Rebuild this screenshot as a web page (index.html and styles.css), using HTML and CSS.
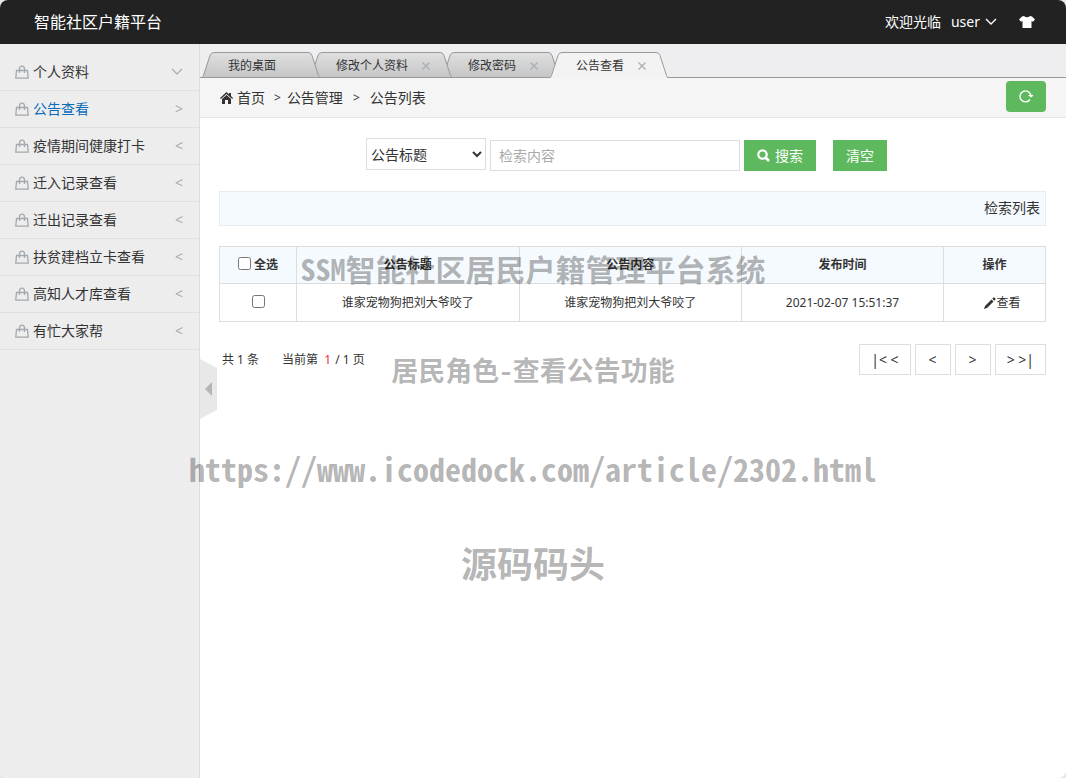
FILE: index.html
```html
<!DOCTYPE html>
<html lang="zh-CN">
<head>
<meta charset="utf-8">
<title>智能社区户籍平台</title>
<link rel="stylesheet" href="styles.css">
</head>
<body>
<svg class="defs" aria-hidden="true">
  <defs>
    <linearGradient id="tab-grey" x1="0" y1="0" x2="0" y2="1"><stop offset="0" stop-color="#dedfde"/><stop offset="1" stop-color="#c5c5c7"/></linearGradient>
    <symbol id="bag" viewBox="0 0 14 14"><path d="M1.5 5.5h11l.7 7.7H.8z" fill="none" stroke="#a3a9b0" stroke-width="1.3"/><path d="M4.5 8V4a2.5 2.9 0 0 1 5 0v4" fill="none" stroke="#a3a9b0" stroke-width="1.3"/></symbol>
    <symbol id="cap-left" viewBox="0 0 12 26"><path d="M0 26 1 24 7.5 4Q8.700 .5 12 .5V26z"/><path d="M0 25.500Q1 25 1.500 23.500L8 3.500Q9 .5 12 .5" fill="none" stroke="#999"/></symbol>
    <symbol id="cap-right" viewBox="0 0 12 26"><path d="M12 26 11 24 4.500 4Q3.300 .5 0 .5V26z"/><path d="M12 25.500Q11 25 10.500 23.500L4 3.500Q3 .5 0 .5" fill="none" stroke="#999"/></symbol>
    <symbol id="close" viewBox="0 0 8 8"><path d="M.5 .5l7 7M7.500 .5l-7 7" stroke="#a9aeb3" stroke-width="1.300"/></symbol>
  </defs>
</svg>
<div class="app">
  <header class="header">
    <h1 class="brand">智能社区户籍平台</h1>
    <div class="account">
      <span>欢迎光临</span>
      <button class="user" type="button">user
        <svg width="12" height="8" viewBox="0 0 12 8"><path d="M1 1l5 5 5-5" fill="none" stroke="#fff" stroke-width="1.400"/></svg>
      </button>
      <button class="skin" type="button" aria-label="换肤">
        <svg width="16" height="12" viewBox="0 0 16 12"><path d="M5 0Q8 2.600 11 0L13 .6 16 3.500 14 5.800 12.500 5V12H3.500V5L2 5.800 0 3.500 3 .6z" fill="#fff"/></svg>
      </button>
    </div>
  </header>
  <div class="layout">
    <nav class="sidebar">
      <a class="menu" href="#"><svg class="bag"><use href="#bag"/></svg><span>个人资料</span><svg class="down" viewBox="0 0 12 8"><path d="M1 1l5 5 5-5" fill="none" stroke="#aaa" stroke-width="1.200"/></svg></a>
      <a class="menu menu-active" href="#"><svg class="bag"><use href="#bag"/></svg><span>公告查看</span><i class="arrow">&gt;</i></a>
      <a class="menu" href="#"><svg class="bag"><use href="#bag"/></svg><span>疫情期间健康打卡</span><i class="arrow">&lt;</i></a>
      <a class="menu" href="#"><svg class="bag"><use href="#bag"/></svg><span>迁入记录查看</span><i class="arrow">&lt;</i></a>
      <a class="menu" href="#"><svg class="bag"><use href="#bag"/></svg><span>迁出记录查看</span><i class="arrow">&lt;</i></a>
      <a class="menu" href="#"><svg class="bag"><use href="#bag"/></svg><span>扶贫建档立卡查看</span><i class="arrow">&lt;</i></a>
      <a class="menu" href="#"><svg class="bag"><use href="#bag"/></svg><span>高知人才库查看</span><i class="arrow">&lt;</i></a>
      <a class="menu" href="#"><svg class="bag"><use href="#bag"/></svg><span>有忙大家帮</span><i class="arrow">&lt;</i></a>
    </nav>
    <main class="main">
      <button class="collapse" type="button" aria-label="收起菜单">
        <svg width="17" height="60" viewBox="0 0 17 60"><path d="M0 0 17 9V51L0 60z" fill="#e8e8e8"/><path d="M12 23v14l-7-7z" fill="#b5b5b5"/></svg>
      </button>
      <div class="tabs">
        <div class="tab"><svg class="cap"><use href="#cap-left"/></svg><div class="tab-body"><span>我的桌面</span></div><svg class="cap"><use href="#cap-right"/></svg></div>
        <div class="tab"><svg class="cap"><use href="#cap-left"/></svg><div class="tab-body"><span>修改个人资料</span><button class="close" type="button" aria-label="关闭"><svg><use href="#close"/></svg></button></div><svg class="cap"><use href="#cap-right"/></svg></div>
        <div class="tab"><svg class="cap"><use href="#cap-left"/></svg><div class="tab-body"><span>修改密码</span><button class="close" type="button" aria-label="关闭"><svg><use href="#close"/></svg></button></div><svg class="cap"><use href="#cap-right"/></svg></div>
        <div class="tab tab-active"><svg class="cap"><use href="#cap-left"/></svg><div class="tab-body"><span>公告查看</span><button class="close" type="button" aria-label="关闭"><svg><use href="#close"/></svg></button></div><svg class="cap"><use href="#cap-right"/></svg></div>
      </div>
      <div class="crumbs">
        <svg width="13" height="12" viewBox="0 0 13 12"><path d="M6.500 0 9 2.300V1h2v3L13 6l-.8.9L6.500 1.900.8 6.900 0 6z" fill="#333"/><path d="M6.500 3 11 7v5H8V8H5v4H2V7z" fill="#333"/></svg>
        <span>首页</span><span class="sep">&gt;</span><span>公告管理</span><span class="sep sep-wide">&gt;</span><span>公告列表</span>
        <button class="refresh" type="button" aria-label="刷新">
          <svg width="14" height="14" viewBox="0 0 14 14"><path d="M11 10.500A5.500 5.500 0 1 1 11.800 6" fill="none" stroke="#fff" stroke-width="1.400"/><path d="M8.800 6h5.200v1L12 8.500z" fill="#fff"/></svg>
        </button>
      </div>
      <div class="content">
        <form class="search">
          <select class="field-select" aria-label="检索字段"><option>公告标题</option></select>
          <input class="field-text" type="text" placeholder="检索内容" aria-label="检索内容">
          <button class="btn" type="button"><svg width="13" height="13" viewBox="0 0 13 13"><circle cx="5.500" cy="5.500" r="4.200" fill="none" stroke="#fff" stroke-width="2.200"/><path d="M8.500 8.500l3.500 3.500" stroke="#fff" stroke-width="2.600"/></svg>搜索</button>
          <button class="btn btn-clear" type="reset">清空</button>
        </form>
        <div class="list-bar">检索列表</div>
        <table class="grid">
          <colgroup><col class="c-check"><col class="c-text"><col class="c-text"><col class="c-time"><col class="c-op"></colgroup>
          <thead><tr><th><label class="check"><input type="checkbox">全选</label></th><th>公告标题</th><th>公告内容</th><th>发布时间</th><th>操作</th></tr></thead>
          <tbody><tr><td><div class="check"><input type="checkbox" aria-label="选择"></div></td><td>谁家宠物狗把刘大爷咬了</td><td>谁家宠物狗把刘大爷咬了</td><td>2021-02-07 15:51:37</td><td><a class="view" href="#"><svg width="12" height="12" viewBox="0 0 12 12"><path d="M0 12 1 9 7.500 2.500 9.500 4.500 3 11zM8.300 1.700 9.400.6q.5-.4 1 0l1 1q.4.500 0 1L10.300 3.700z" fill="#333"/></svg>查看</a></td></tr></tbody>
        </table>
        <div class="pager">
          <p class="summary"><span>共 1 条</span><span>当前第 <b class="current">1</b> / 1 页</span></p>
          <div class="pages"><button class="edge" type="button">|&lt; &lt;</button><button type="button">&lt;</button><button type="button">&gt;</button><button class="edge" type="button">&gt; &gt;|</button></div>
        </div>
      </div>
    </main>
  </div>
  <div class="watermark">
    <p class="mark-title">SSM智能社区居民户籍管理平台系统</p>
    <p class="mark-role">居民角色-查看公告功能</p>
    <p class="mark-url">https://www.icodedock.com/article/2302.html</p>
    <p class="mark-name">源码码头</p>
  </div>
</div>
</body>
</html>
```
FILE: styles.css
```css
* { box-sizing: border-box; }
body { margin: 0; background: #e6e8ea; color: #333; font: 14px/20px "Noto Sans", "Noto Sans CJK SC", sans-serif; }
a { color: inherit; text-decoration: none; }
button, input, select { font: inherit; color: inherit; }
button { display: inline-flex; align-items: center; justify-content: center; margin: 0; padding: 0; border: 0; background: none; }
p, h1 { margin: 0; }
svg { display: block; flex: none; }
.defs { position: absolute; width: 0; height: 0; }
.app { position: relative; display: flex; flex-direction: column; min-height: 100vh; overflow: hidden; border-radius: 8px; background: #fff; }

.header { display: flex; align-items: center; justify-content: space-between; height: 44px; padding: 0 31px 0 34px; background: #222; color: #fff; }
.brand { font-size: 16px; font-weight: 400; }
.account { display: flex; align-items: center; }
.user { gap: 5px; margin: 0 22px 0 10px; }

.layout { display: flex; flex: 1; }
.sidebar { width: 200px; padding-top: 10px; border-right: 1px solid #ddd; background: #ededed; }
.menu { display: flex; align-items: center; gap: 4px; height: 37px; padding: 0 16px 0 15px; border-bottom: 1px solid #e0e0e0; }
.menu span { flex: 1; }
.menu-active span { color: #0d6cb9; }
.bag { width: 14px; height: 14px; }
.down { width: 12px; height: 8px; }
.arrow { color: #aaa; font-style: normal; }

.main { position: relative; flex: 1; min-width: 0; }
.collapse { position: absolute; left: 0; top: 315px; }
.tabs { position: relative; display: flex; align-items: flex-end; height: 34px; padding-left: 2px; background: #eeeef0; }
.tabs::after { content: ""; position: absolute; inset: auto 0 0; z-index: 3; height: 1px; background: #999; }
.tab { position: relative; display: flex; height: 26px; margin-right: -10px; font-size: 12px; }
.tab:nth-child(1) { z-index: 3; }
.tab:nth-child(2) { z-index: 2; }
.tab:nth-child(3) { z-index: 1; }
.tab:nth-child(4) { z-index: 4; }
.cap { width: 12px; height: 26px; fill: url(#tab-grey); }
.tab-body { display: flex; align-items: center; gap: 14px; padding: 1px 32px 0 14px; border-top: 1px solid #999; background: linear-gradient(#dedfde, #c5c5c7); }
.tab-body:has(.close) { padding-right: 10px; }
.close svg { width: 8px; height: 8px; }
.tab-active .cap { fill: #f3f3f3; }
.tab-active .tab-body { background: #f3f3f3; }

.crumbs { display: flex; align-items: center; height: 40px; padding: 0 20px; border-bottom: 1px solid #e5e5e5; background: #f5f5f5; }
.crumbs svg { margin-right: 4px; }
.sep { margin: 0 6px 0 9px; font-size: 12px; }
.sep-wide { margin: 0 10px; }
.refresh { width: 40px; height: 31px; margin-left: auto; margin-bottom: 3px; border-radius: 4px; background: #5eb95e; }
.crumbs .refresh svg { margin: 0; }

.content { padding: 20px 20px 20px 19px; }
.search { display: flex; align-items: flex-end; justify-content: center; gap: 4px; height: 33px; padding-right: 12px; }
.field-select { width: 120px; height: 32px; margin-bottom: 1px; padding: 0; border: 1px solid #ddd; border-radius: 0; background: #fff; }
.field-text { width: 250px; height: 31px; padding: 0 8px; border: 1px solid #ddd; }
.field-text::placeholder { color: #aaa; }
.btn { gap: 5px; height: 31px; padding: 0 13px; background: #5eb95e; color: #fff; }
.btn-clear { margin-left: 13px; }
.list-bar { margin-top: 20px; padding: 6px 5px 7px; border: 1px solid #e8ecef; background: #f5fafe; text-align: right; }

.grid { width: 100%; margin-top: 20px; border-collapse: collapse; table-layout: fixed; font-size: 12px; text-align: center; }
.grid th, .grid td { height: 37px; padding: 0; border: 1px solid #ddd; }
.grid td { height: 38px; }
.grid th { background: #f5fafe; }
.c-check { width: 77px; }
.c-time { width: 202px; }
.c-op { width: 102px; }
.check { display: flex; align-items: center; justify-content: center; gap: 3px; }
.check input { width: 13px; height: 13px; margin: 0 0 3px; }
.view { display: flex; align-items: center; justify-content: center; padding-left: 16px; }

.pager { display: flex; align-items: center; justify-content: space-between; margin-top: 22px; }
.summary { display: flex; gap: 23px; padding-left: 3px; font-size: 12px; }
.current { margin: 0 1px 0 3px; color: #e33; font-weight: 400; }
.pages { display: flex; gap: 4px; }
.pages button { height: 31px; padding: 0 13px; border: 1px solid #ddd; background: #fff; }
.pages .edge { padding: 0 11px; }

.watermark { position: absolute; inset: 0; z-index: 10; padding-top: 218px; color: rgba(0, 0, 0, .3); font-family: "Noto Sans Mono CJK SC", "Noto Sans CJK SC", monospace; font-weight: 700; text-align: center; pointer-events: none; }
.mark-title { font-size: 30px; line-height: 100px; }
.mark-role { font-size: 27px; line-height: 104px; }
.mark-url { font-size: 32px; line-height: 92px; }
.mark-name { font-size: 36px; line-height: 96px; }
```
